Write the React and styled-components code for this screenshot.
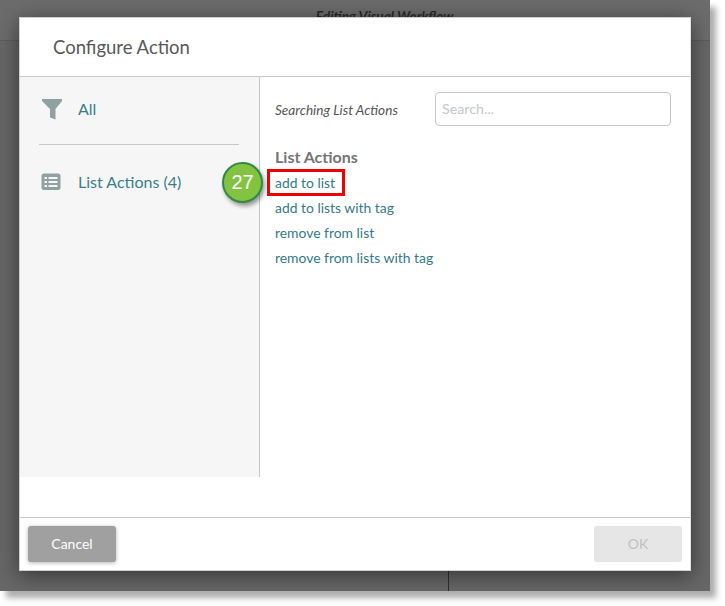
import React from 'react';
import styled, { createGlobalStyle } from 'styled-components';

const Global = createGlobalStyle`
  html, body { margin: 0; padding: 0; background: #fff; width: 725px; height: 606px; overflow: hidden; }
  body { font-family: Lato, "Open Sans", sans-serif; }
  * { box-sizing: border-box; }
`;
const Frame = styled.div`
  position: relative;
  width: 710px;
  height: 591px;
  background: #676767;
  box-shadow: 6px 7px 6px rgba(0,0,0,0.32);
  overflow: hidden;
  padding: 17px 19px;
`;
const TopBar = styled.div`
  position: absolute;
  left: 0; right: 0; top: 0;
  height: 41px;
  background: #6c6c6c;
  border-bottom: 1px solid #5c5c5c;
  text-align: center;
  font-size: 13.7px;
  font-style: italic;
  font-weight: 700;
  color: #2a2a2a;
  padding-top: 7px;
  padding-left: 59px;
`;
const Rule = styled.div`
  position: absolute;
  left: 448px;
  top: 560px;
  bottom: 0;
  width: 1px;
  background: #2f2f2f;
`;
const Dialog = styled.div`
  position: relative;
  width: 672px;
  height: 554px;
  background: #fff;
  border: 1px solid #d0d0d0;
  border-right-color: #e0e0e0;
  box-shadow: 0 4px 20px rgba(0,0,0,0.5);
  display: flex;
  flex-direction: column;
`;
const Header = styled.div`
  height: 59px;
  flex: none;
  border-bottom: 1px solid #c8c8c8;
  padding-left: 33px;
  display: flex;
  align-items: center;
  font-size: 18.5px;
  color: #595959;
`;
const Body = styled.div`
  height: 400px;
  flex: none;
  display: flex;
`;
const Sidebar = styled.div`
  width: 240px;
  flex: none;
  background: #f6f6f6;
  border-right: 1px solid #c8c8c8;
  padding: 0 20px;
`;
const SideItem = styled.div`
  display: flex;
  align-items: center;
  height: ${p => p.$h}px;
  font-size: 16px;
  color: #3a7f8c;
  gap: ${p => p.$gap}px;
  padding-left: ${p => p.$pad}px;
  padding-bottom: ${p => p.$pb}px;
`;
const SideRule = styled.div`
  height: 1px;
  background: #c8c8c8;
  margin-left: -1px;
`;
const Main = styled.div`
  flex: 1;
  padding: 15px 19px 0 15px;
  position: relative;
`;
const SearchRow = styled.div`
  display: flex;
  align-items: center;
  justify-content: space-between;
  height: 34px;
`;
const SearchLabel = styled.span`
  font-size: 13.6px;
  font-style: italic;
  color: #555;
  padding-top: 2px;
`;
const SearchBox = styled.input`
  width: 236px;
  height: 34px;
  border: 1px solid #c8c8c8;
  border-radius: 4px;
  background: #fff;
  padding: 0 6px 2px;
  font-family: inherit;
  font-size: 14.3px;
  outline: none;
  &::placeholder { color: #c4c8c8; opacity: 1; }
`;
const GroupTitle = styled.div`
  margin-top: 22px;
  font-size: 16px;
  font-weight: 700;
  color: #757575;
  line-height: 18px;
`;
const ActionList = styled.div`
  display: flex;
  flex-direction: column;
  margin-top: 4px;
`;
const Action = styled.div`
  font-size: 13.9px;
  color: #357a86;
  height: 25px;
  line-height: 25px;
`;
const Highlight = styled.div`
  position: absolute;
  left: 7px;
  top: 92px;
  width: 78px;
  height: 27px;
  border: 3px solid #f00000;
`;
const Badge = styled.div`
  position: absolute;
  left: -38px;
  top: 85px;
  width: 41px;
  height: 41px;
  border-radius: 50%;
  background: #84c341;
  border: 2px solid #2f8a45;
  box-shadow: 2px 3px 4px rgba(0,0,0,0.4);
  color: #fff;
  font-family: "Liberation Sans", Arial, sans-serif;
  font-size: 20px;
  display: flex;
  align-items: center;
  justify-content: center;
`;
const Spacer = styled.div`
  flex: 1;
`;
const Footer = styled.div`
  height: 53px;
  flex: none;
  border-top: 1px solid #c8c8c8;
  padding: 8px 8px 0 8px;
  display: flex;
  justify-content: space-between;
  align-items: flex-start;
`;
const Button = styled.div`
  width: 88px;
  height: 36px;
  border-radius: 3px;
  display: flex;
  align-items: center;
  justify-content: center;
  font-size: 14px;
  padding-bottom: 2px;
  background: ${p => p.$primary ? '#a0a0a0' : '#e6e6e6'};
  color: ${p => p.$primary ? '#fff' : '#c0c0c0'};
  box-shadow: ${p => p.$primary ? '0 1px 4px rgba(0,0,0,0.3)' : 'none'};
`;

const Funnel = () => (
  <svg width="22" height="22" viewBox="0 0 22 22">
    <path d="M1 1h20v2l-6.5 8v10.5l-5.5-2V11L1 3z" fill="#8fa1a0" />
  </svg>
);
const ListIcon = () => (
  <svg width="20" height="18" viewBox="0 0 20 18">
    <rect x="0.5" y="0.5" width="19" height="16.5" rx="2.5" fill="#8fa1a0" />
    <g fill="#f6f6f6">
      <rect x="3.5" y="4" width="2.5" height="2" />
      <rect x="7.5" y="4" width="9" height="2" />
      <rect x="3.5" y="8" width="2.5" height="2" />
      <rect x="7.5" y="8" width="9" height="2" />
      <rect x="3.5" y="12" width="2.5" height="2" />
      <rect x="7.5" y="12" width="9" height="2" />
    </g>
  </svg>
);

export default function App() {
  return (
    <>
      <Global />
      <Frame>
        <TopBar>Editing Visual Workflow</TopBar>
        <Rule />
        <Dialog>
          <Header>Configure Action</Header>
          <Body>
            <Sidebar>
              <SideItem $h={67} $gap={15} $pad={1} $pb={4}><Funnel />All</SideItem>
              <SideRule />
              <SideItem $h={75} $gap={17} $pad={1} $pb={2}><ListIcon />List Actions (4)</SideItem>
            </Sidebar>
            <Main>
              <SearchRow>
                <SearchLabel>Searching List Actions</SearchLabel>
                <SearchBox placeholder="Search..." />
              </SearchRow>
              <GroupTitle>List Actions</GroupTitle>
              <ActionList>
                <Action>add to list</Action>
                <Action>add to lists with tag</Action>
                <Action>remove from list</Action>
                <Action>remove from lists with tag</Action>
              </ActionList>
              <Highlight />
              <Badge>27</Badge>
            </Main>
          </Body>
          <Spacer />
          <Footer>
            <Button $primary>Cancel</Button>
            <Button>OK</Button>
          </Footer>
        </Dialog>
      </Frame>
    </>
  );
}
